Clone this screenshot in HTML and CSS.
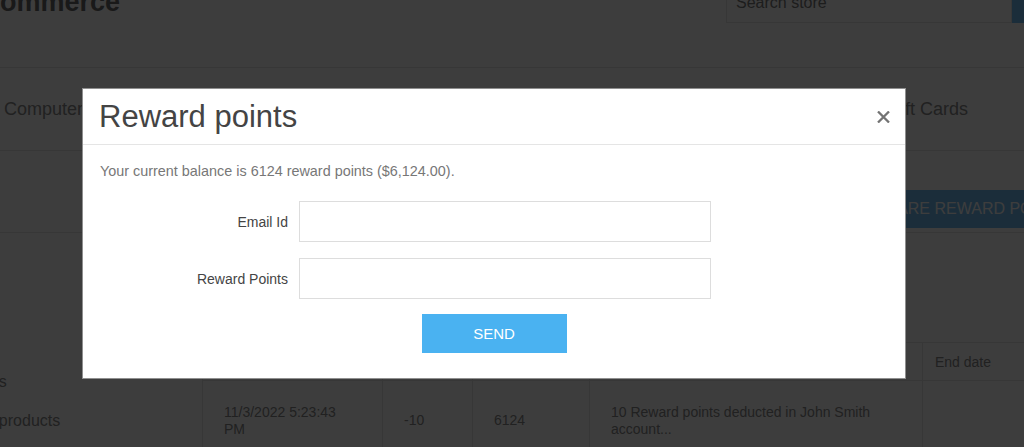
FILE: index.html
```html
<!DOCTYPE html>
<html lang="en">
<head>
<meta charset="utf-8">
<title>Reward points</title>
<link rel="stylesheet" href="styles.css">
</head>
<body>
<div class="page">
  <header class="header">
    <div class="logo">nopCommerce</div>
    <form class="search">
      <input class="search-input" type="text" placeholder="Search store">
      <button class="search-btn" type="button"></button>
    </form>
  </header>
  <nav class="nav">
    <span class="nav-item">Computers</span>
    <span class="nav-item">Electronics</span>
    <span class="nav-item">Apparel</span>
    <span class="nav-item">Digital downloads</span>
    <span class="nav-item">Books</span>
    <span class="nav-item">Jewelry</span>
    <span class="nav-item">Gift Cards</span>
  </nav>
  <div class="band">
    <button class="transfer-btn" type="button">Share reward points</button>
  </div>
  <div class="main">
    <aside class="sidebar">
      <ul class="side-list">
        <li>Customer info</li>
        <li>Addresses</li>
        <li>Orders</li>
        <li>Return requests</li>
        <li>Downloadable products</li>
      </ul>
    </aside>
    <table class="history">
      <thead>
        <tr>
          <th class="c-date">Date</th>
          <th class="c-points">Points</th>
          <th class="c-bal">Points balance</th>
          <th class="c-msg">Message</th>
          <th class="c-end">End date</th>
        </tr>
      </thead>
      <tbody>
        <tr>
          <td>11/3/2022 5:23:43<br>PM</td>
          <td>-10</td>
          <td>6124</td>
          <td>10 Reward points deducted in John Smith account...</td>
          <td></td>
        </tr>
      </tbody>
    </table>
  </div>
</div>

<div class="overlay">
  <div class="modal">
    <div class="modal-header">
      <h4 class="modal-title">Reward points</h4>
      <button class="close" type="button" aria-label="Close">
        <svg width="13" height="12" viewBox="0 0 13 12"><path d="M1 0.5 L12 11.5 M12 0.5 L1 11.5" stroke="#737373" stroke-width="2.3" fill="none"/></svg>
      </button>
    </div>
    <div class="modal-body">
      <p class="balance">Your current balance is 6124 reward points ($6,124.00).</p>
      <div class="form">
        <label class="label" for="email">Email Id</label>
        <input class="field" id="email" type="text">
        <label class="label" for="points">Reward Points</label>
        <input class="field" id="points" type="text">
      </div>
      <div class="actions">
        <button class="send" type="button">SEND</button>
      </div>
    </div>
  </div>
</div>
</body>
</html>
```

FILE: styles.css
```css
html, body {
  margin: 0;
  padding: 0;
}
body {
  overflow: hidden;
  background: #fff;
  font-family: "Liberation Sans", Arial, sans-serif;
}

/* page is scrolled: shifted up and left */
.page {
  width: 1280px;
  margin: -40px 0 0 -180px;
}

.header {
  display: flex;
  align-items: flex-start;
  height: 107px;
  padding: 0 40px 0 111px;
  border-bottom: 1px solid #e5e5e5;
}
.logo {
  margin-top: 29px;
  font-size: 27px;
  line-height: 27px;
  font-weight: bold;
  color: #6a6a6a;
}
.search {
  display: flex;
  margin: 22px 0 0 auto;
}
.search-input {
  box-sizing: border-box;
  width: 286px;
  height: 41px;
  padding: 0 9px;
  border: 1px solid #e5e5e5;
  font: 16px "Liberation Sans", Arial, sans-serif;
  color: #777;
}
.search-input::placeholder {
  color: #7a7a7a;
}
.search-btn {
  width: 48px;
  height: 41px;
  border: none;
  background: #70bcf2;
}

.nav {
  display: flex;
  justify-content: space-between;
  align-items: center;
  height: 82px;
  padding: 0 132px 0 184px;
  border-bottom: 1px solid #e5e5e5;
}
.nav-item {
  font-size: 18px;
  color: #8a8a8a;
}

.band {
  display: flex;
  align-items: flex-end;
  height: 81px;
  border-bottom: 1px solid #e5e5e5;
}
.transfer-btn {
  margin: 0 11px 4px auto;
  height: 38px;
  padding: 0 20px;
  border: none;
  background: #70bcf2;
  color: #fff;
  font: 16px "Liberation Sans", Arial, sans-serif;
  text-transform: uppercase;
}

.main {
  display: flex;
  align-items: flex-start;
}
.sidebar {
  width: 382px;
  flex: none;
}
.side-list {
  list-style: none;
  margin: 0;
  padding: 12px 0 0 73px;
}
.side-list li {
  font-size: 16px;
  line-height: 39px;
  color: #8a8a8a;
}

.history {
  margin-top: 109px;
  border-collapse: collapse;
  table-layout: fixed;
  width: 870px;
  font-size: 14px;
  color: #8a8a8a;
}
.history th,
.history td {
  box-sizing: border-box;
  border: 1px solid #e5e5e5;
  text-align: left;
  font-weight: normal;
}
.history th {
  height: 38px;
  padding: 0 12px;
}
.history td {
  height: 80px;
  padding: 0 21px;
  line-height: 17px;
  vertical-align: middle;
}
.c-date { width: 180px; }
.c-points { width: 90px; }
.c-bal { width: 117px; }
.c-msg { width: 333px; }
.c-end { width: 150px; }

/* modal */
.overlay {
  position: fixed;
  inset: 0;
  background: rgba(0, 0, 0, 0.76);
}
.modal {
  box-sizing: border-box;
  width: 824px;
  margin: 88px 0 0 82px;
  background: #fff;
  border: 1px solid #8f8f8f;
}
.modal-header {
  display: flex;
  align-items: center;
  justify-content: space-between;
  height: 55px;
  padding: 0 15px 0 16px;
  border-bottom: 1px solid #e5e5e5;
}
.modal-title {
  margin: 0;
  font-size: 31px;
  line-height: 33px;
  font-weight: normal;
  color: #444;
}
.close {
  display: flex;
  padding: 0;
  border: none;
  background: none;
}
.modal-body {
  padding: 16px 17px 25px;
}
.balance {
  margin: 0;
  font-size: 14.4px;
  line-height: 20px;
  color: #777;
}
.form {
  display: grid;
  grid-template-columns: 188px 412px;
  column-gap: 11px;
  row-gap: 16px;
  align-items: center;
  margin-top: 20px;
}
.label {
  justify-self: end;
  font-size: 14px;
  color: #444;
}
.field {
  box-sizing: border-box;
  width: 412px;
  height: 41px;
  border: 1px solid #ddd;
  padding: 0 10px;
  font: 14px "Liberation Sans", Arial, sans-serif;
}
.actions {
  display: flex;
  justify-content: center;
  margin-top: 15px;
}
.send {
  width: 145px;
  height: 39px;
  border: none;
  background: #4ab2f1;
  color: #fff;
  font: 15px "Liberation Sans", Arial, sans-serif;
}
```
